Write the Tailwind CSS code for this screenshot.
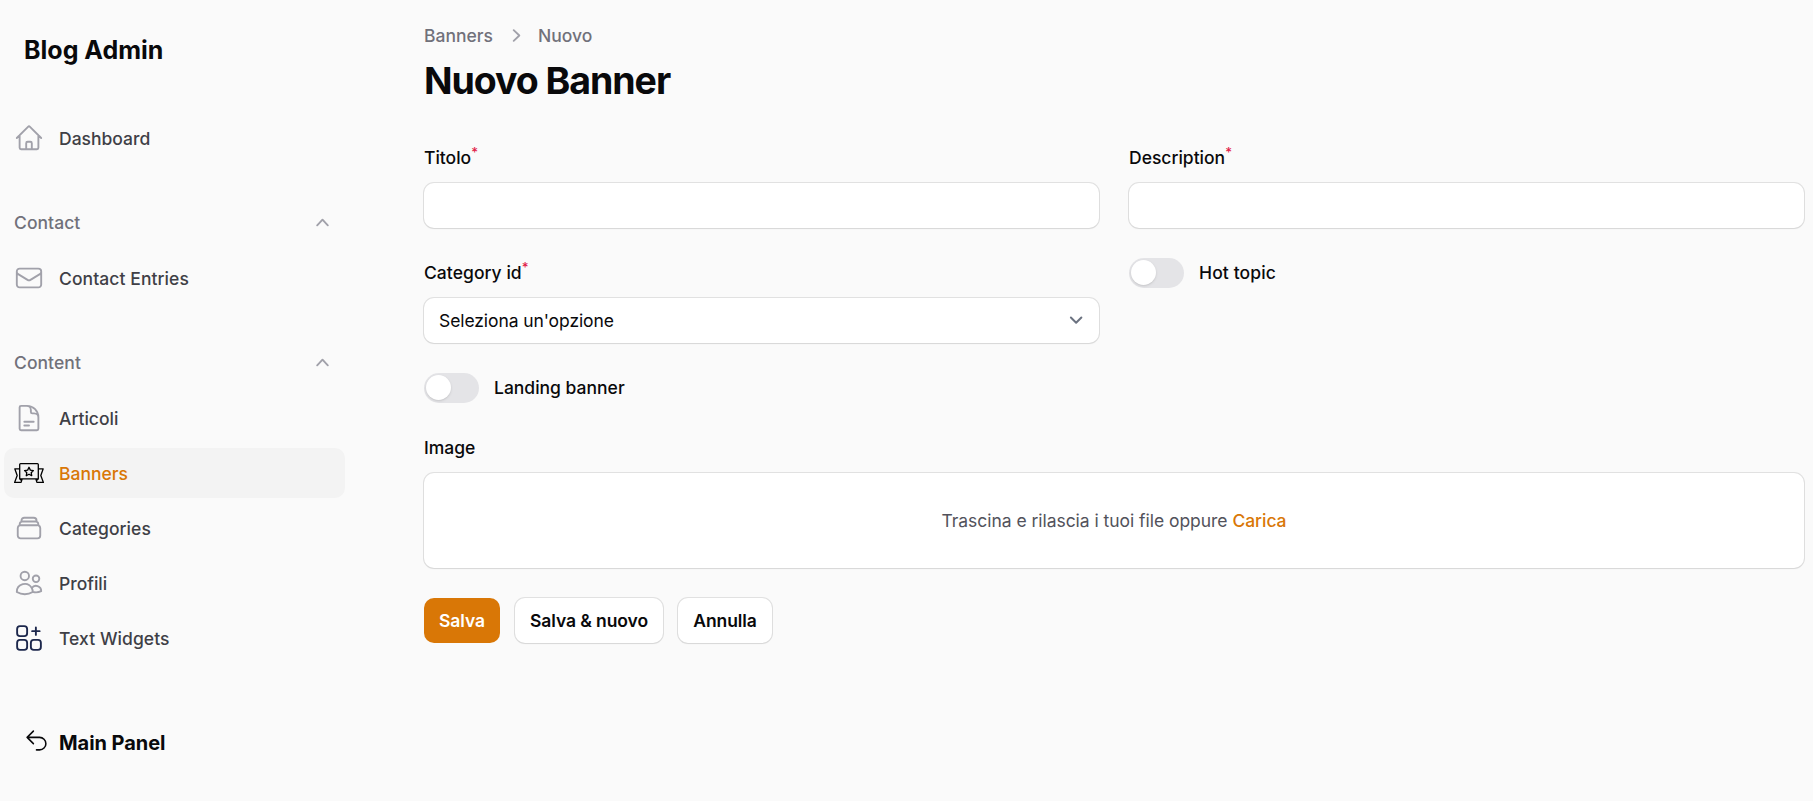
<!DOCTYPE html>
<html lang="it">
<head>
<meta charset="utf-8">
<title>Nuovo Banner - Blog Admin</title>
<script src="https://cdn.jsdelivr.net/npm/@tailwindcss/browser@4"></script>
</head>
<body class="flex h-[801px] overflow-hidden bg-[#fafafa] font-[Inter,sans-serif] text-[17.5px] leading-[30px] text-[#09090b]">
  <aside class="flex w-[345px] shrink-0 flex-col pl-1">
    <div class="flex h-[100px] items-center pl-5 text-[25px] font-bold">Blog Admin</div>
    <nav class="mt-[13px] flex flex-col gap-[35px] font-medium text-[#3f3f46]">
      <a class="flex h-[50px] items-center gap-[15px] rounded-[10px] px-2.5">
        <svg class="size-[30px] text-[#a1a1aa]" viewBox="0 0 24 24" fill="none" stroke="currentColor" stroke-width="1.5" stroke-linecap="round" stroke-linejoin="round"><path d="m2.25 12 8.954-8.955c.44-.439 1.152-.439 1.591 0L21.75 12M4.5 9.75v10.125c0 .621.504 1.125 1.125 1.125H9.75v-4.875c0-.621.504-1.125 1.125-1.125h2.25c.621 0 1.125.504 1.125 1.125V21h4.125c.621 0 1.125-.504 1.125-1.125V9.75M8.25 21h8.25"/></svg>
        <span class="pt-0.5">Dashboard</span>
      </a>
      <section class="flex flex-col gap-[5px]">
        <div class="flex h-[50px] items-center justify-between px-2.5 tracking-[0.06px] text-[#71717a]">
          <span>Contact</span>
          <svg class="mb-0.5 size-[25px] text-[#a1a1aa]" viewBox="0 0 20 20" fill="currentColor"><path fill-rule="evenodd" d="M14.77 12.79a.75.75 0 0 1-1.06-.02L10 8.832 6.29 12.77a.75.75 0 1 1-1.08-1.04l4.25-4.5a.75.75 0 0 1 1.08 0l4.25 4.5a.75.75 0 0 1-.02 1.06z"/></svg>
        </div>
        <a class="flex h-[50px] items-center gap-[15px] rounded-[10px] px-2.5">
          <svg class="size-[30px] text-[#a1a1aa]" viewBox="0 0 24 24" fill="none" stroke="currentColor" stroke-width="1.5" stroke-linecap="round" stroke-linejoin="round"><path d="M21.75 6.75v10.5a2.25 2.25 0 0 1-2.25 2.25h-15a2.25 2.25 0 0 1-2.25-2.25V6.75m19.5 0A2.25 2.25 0 0 0 19.5 4.5h-15a2.25 2.25 0 0 0-2.25 2.25m19.5 0v.243a2.25 2.25 0 0 1-1.07 1.916l-7.5 4.615a2.25 2.25 0 0 1-2.36 0L3.32 8.91a2.25 2.25 0 0 1-1.07-1.916V6.75"/></svg>
          <span class="pt-0.5 tracking-[0.08px]">Contact Entries</span>
        </a>
      </section>
      <section class="flex flex-col gap-[5px]">
        <div class="flex h-[50px] items-center justify-between px-2.5 tracking-[0.06px] text-[#71717a]">
          <span>Content</span>
          <svg class="mb-0.5 size-[25px] text-[#a1a1aa]" viewBox="0 0 20 20" fill="currentColor"><path fill-rule="evenodd" d="M14.77 12.79a.75.75 0 0 1-1.06-.02L10 8.832 6.29 12.77a.75.75 0 1 1-1.08-1.04l4.25-4.5a.75.75 0 0 1 1.08 0l4.25 4.5a.75.75 0 0 1-.02 1.06z"/></svg>
        </div>
        <a class="flex h-[50px] items-center gap-[15px] rounded-[10px] px-2.5">
          <svg class="size-[30px] text-[#a1a1aa]" viewBox="0 0 24 24" fill="none" stroke="currentColor" stroke-width="1.5" stroke-linecap="round" stroke-linejoin="round"><path d="M19.5 14.25v-2.625a3.375 3.375 0 0 0-3.375-3.375h-1.5A1.125 1.125 0 0 1 13.5 7.125v-1.5a3.375 3.375 0 0 0-3.375-3.375H8.25m0 12.75h7.5m-7.5 3H12M10.5 2.25H5.625c-.621 0-1.125.504-1.125 1.125v17.25c0 .621.504 1.125 1.125 1.125h12.75c.621 0 1.125-.504 1.125-1.125V11.25a9 9 0 0 0-9-9z"/></svg>
          <span class="pt-0.5">Articoli</span>
        </a>
        <a class="flex h-[50px] items-center gap-[15px] rounded-[10px] bg-[#f3f3f3] px-2.5 text-[#d97706]">
          <svg class="size-[30px] text-black" viewBox="0 0 30 30" fill="none" stroke="currentColor" stroke-width="1.3" stroke-linejoin="round"><path d="M5.7 20.9V6.6a.9.9 0 0 1 .9-.9h16.8a.9.9 0 0 1 .9.9v14.3zM5.7 10.8H.8l2.4 6.7L.6 24.4h6.5l1.1-3.5M5.7 20.9l2 2M24.3 10.8h4.9l-2.4 6.7 2.6 6.9h-6.5l-1.1-3.5M24.3 20.9l-2 2"/><path d="m15 9.3 1.35 2.8 3.05.42-2.2 2.15.53 3.05L15 16.25l-2.73 1.47.53-3.05-2.2-2.15 3.05-.42z"/></svg>
          <span class="pt-0.5">Banners</span>
        </a>
        <a class="flex h-[50px] items-center gap-[15px] rounded-[10px] px-2.5">
          <svg class="size-[30px] text-[#a1a1aa]" viewBox="0 0 24 24" fill="none" stroke="currentColor" stroke-width="1.5" stroke-linecap="round" stroke-linejoin="round"><path d="M6 6.878V6a2.25 2.25 0 0 1 2.25-2.25h7.5A2.25 2.25 0 0 1 18 6v.878m-12 0c.235-.083.487-.128.75-.128h10.5c.263 0 .515.045.75.128m-12 0A2.25 2.25 0 0 0 4.5 9v.878m13.5-3A2.25 2.25 0 0 1 19.5 9v.878m0 0a2.246 2.246 0 0 0-.75-.128H5.25c-.263 0-.515.045-.75.128m15 0A2.25 2.25 0 0 1 21 12v6a2.25 2.25 0 0 1-2.25 2.25H5.25A2.25 2.25 0 0 1 3 18v-6c0-.98.626-1.813 1.5-2.122"/></svg>
          <span class="pt-0.5 tracking-[0.05px]">Categories</span>
        </a>
        <a class="flex h-[50px] items-center gap-[15px] rounded-[10px] px-2.5">
          <svg class="size-[30px] text-[#a1a1aa]" viewBox="0 0 24 24" fill="none" stroke="currentColor" stroke-width="1.5" stroke-linecap="round" stroke-linejoin="round"><path d="M15 19.128a9.38 9.38 0 0 0 2.625.372 9.337 9.337 0 0 0 4.121-.952 4.125 4.125 0 0 0-7.533-2.493M15 19.128v-.003c0-1.113-.285-2.16-.786-3.07M15 19.128v.106A12.318 12.318 0 0 1 8.624 21c-2.331 0-4.512-.645-6.374-1.766l-.001-.109a6.375 6.375 0 0 1 11.964-3.07M12 6.375a3.375 3.375 0 1 1-6.75 0 3.375 3.375 0 0 1 6.75 0zm8.25 2.25a2.625 2.625 0 1 1-5.25 0 2.625 2.625 0 0 1 5.25 0z"/></svg>
          <span class="pt-0.5">Profili</span>
        </a>
        <a class="flex h-[50px] items-center gap-[15px] rounded-[10px] px-2.5">
          <svg class="size-[30px] text-[#1c274c]" viewBox="0 0 24 24" fill="none" stroke="currentColor" stroke-width="1.5" stroke-linecap="round"><rect x="2.5" y="2.5" width="8" height="8" rx="2.3"/><rect x="2.5" y="13.5" width="8" height="8" rx="2.3"/><rect x="13.5" y="13.5" width="8" height="8" rx="2.3"/><path d="M14.5 6.5h6m-3 3v-6"/></svg>
          <span class="pt-0.5 tracking-[0.06px]">Text Widgets</span>
        </a>
      </section>
    </nav>
    <a class="mt-[65px] flex h-[30px] items-center gap-2.5 pl-5 text-[20px] font-bold tracking-[-0.05px]">
      <svg class="mb-[5px] size-[25px]" viewBox="0 0 24 24" fill="none" stroke="currentColor" stroke-width="1.5" stroke-linecap="round" stroke-linejoin="round"><path d="M9 15 3 9m0 0 6-6M3 9h12a6 6 0 0 1 0 12h-3"/></svg>
      <span>Main Panel</span>
    </a>
  </aside>

  <main class="ml-[79px] w-[1380px] pt-[23px]">
    <nav class="flex h-[25px] items-center font-medium text-[#71717a]">
      <span>Banners</span>
      <svg class="mr-[9px] ml-[11px] size-[25px] text-[#a1a1aa]" viewBox="0 0 20 20" fill="currentColor"><path fill-rule="evenodd" d="M7.21 14.77a.75.75 0 0 1 .02-1.06L11.168 10 7.23 6.29a.75.75 0 1 1 1.04-1.08l4.5 4.25a.75.75 0 0 1 0 1.08l-4.5 4.25a.75.75 0 0 1-1.06-.02z"/></svg>
      <span>Nuovo</span>
    </nav>
    <h1 class="mt-2.5 h-[45px] text-[37.5px] leading-[45px] font-bold tracking-[-1.06px]">Nuovo Banner</h1>

    <form class="mt-10 grid grid-cols-2 gap-[30px]">
      <div class="grid gap-2.5">
        <label class="h-[30px] font-medium">Titolo<sup class="text-[13.125px] text-[#e11d48]">*</sup></label>
        <div class="h-[45px] rounded-[10px] bg-white shadow-xs ring-1 ring-[#09090b]/10"></div>
      </div>
      <div class="grid gap-2.5">
        <label class="h-[30px] font-medium">Description<sup class="text-[13.125px] text-[#e11d48]">*</sup></label>
        <div class="h-[45px] rounded-[10px] bg-white shadow-xs ring-1 ring-[#09090b]/10"></div>
      </div>
      <div class="grid gap-2.5">
        <label class="h-[30px] font-medium tracking-[0.04px]">Category id<sup class="text-[13.125px] text-[#e11d48]">*</sup></label>
        <div class="flex h-[45px] items-center justify-between rounded-[10px] bg-white pr-2.5 pl-[15px] shadow-xs ring-1 ring-[#09090b]/10">
          <span class="tracking-[-0.09px]">Seleziona un'opzione</span>
          <svg class="size-[26.25px] text-[#6b7280]" viewBox="0 0 20 20" fill="none" stroke="currentColor" stroke-width="1.5" stroke-linecap="round" stroke-linejoin="round"><path d="m6 8 4 4 4-4"/></svg>
        </div>
      </div>
      <div class="flex h-[30px] items-center gap-[15px]">
        <span class="flex h-[30px] w-[55px] rounded-full bg-[#e4e4e7] p-[2px]"><span class="size-[25px] rounded-full bg-white shadow-sm"></span></span>
        <span class="font-medium tracking-[0.12px]">Hot topic</span>
      </div>
      <div class="col-span-2 flex h-[30px] items-center gap-[15px]">
        <span class="flex h-[30px] w-[55px] rounded-full bg-[#e4e4e7] p-[2px]"><span class="size-[25px] rounded-full bg-white shadow-sm"></span></span>
        <span class="font-medium">Landing banner</span>
      </div>
      <div class="col-span-2 grid gap-2.5">
        <label class="h-[30px] font-medium">Image</label>
        <div class="flex h-[95px] items-center justify-center rounded-[10px] bg-white text-[#52525b] shadow-xs ring-1 ring-[#09090b]/10">
          <p class="tracking-[-0.04px]">Trascina e rilascia i tuoi file oppure <span class="font-medium text-[#d97706]">Carica</span></p>
        </div>
      </div>
      <div class="col-span-2 flex gap-[15px] font-semibold tracking-[-0.08px]">
        <button type="button" class="h-[45px] w-[76px] rounded-[10px] bg-[#d97706] text-white">Salva</button>
        <button type="button" class="h-[45px] w-[148px] rounded-[10px] bg-white shadow-xs ring-1 ring-[#09090b]/10">Salva &amp; nuovo</button>
        <button type="button" class="h-[45px] w-[94px] rounded-[10px] bg-white shadow-xs ring-1 ring-[#09090b]/10">Annulla</button>
      </div>
    </form>
  </main>
</body>
</html>
